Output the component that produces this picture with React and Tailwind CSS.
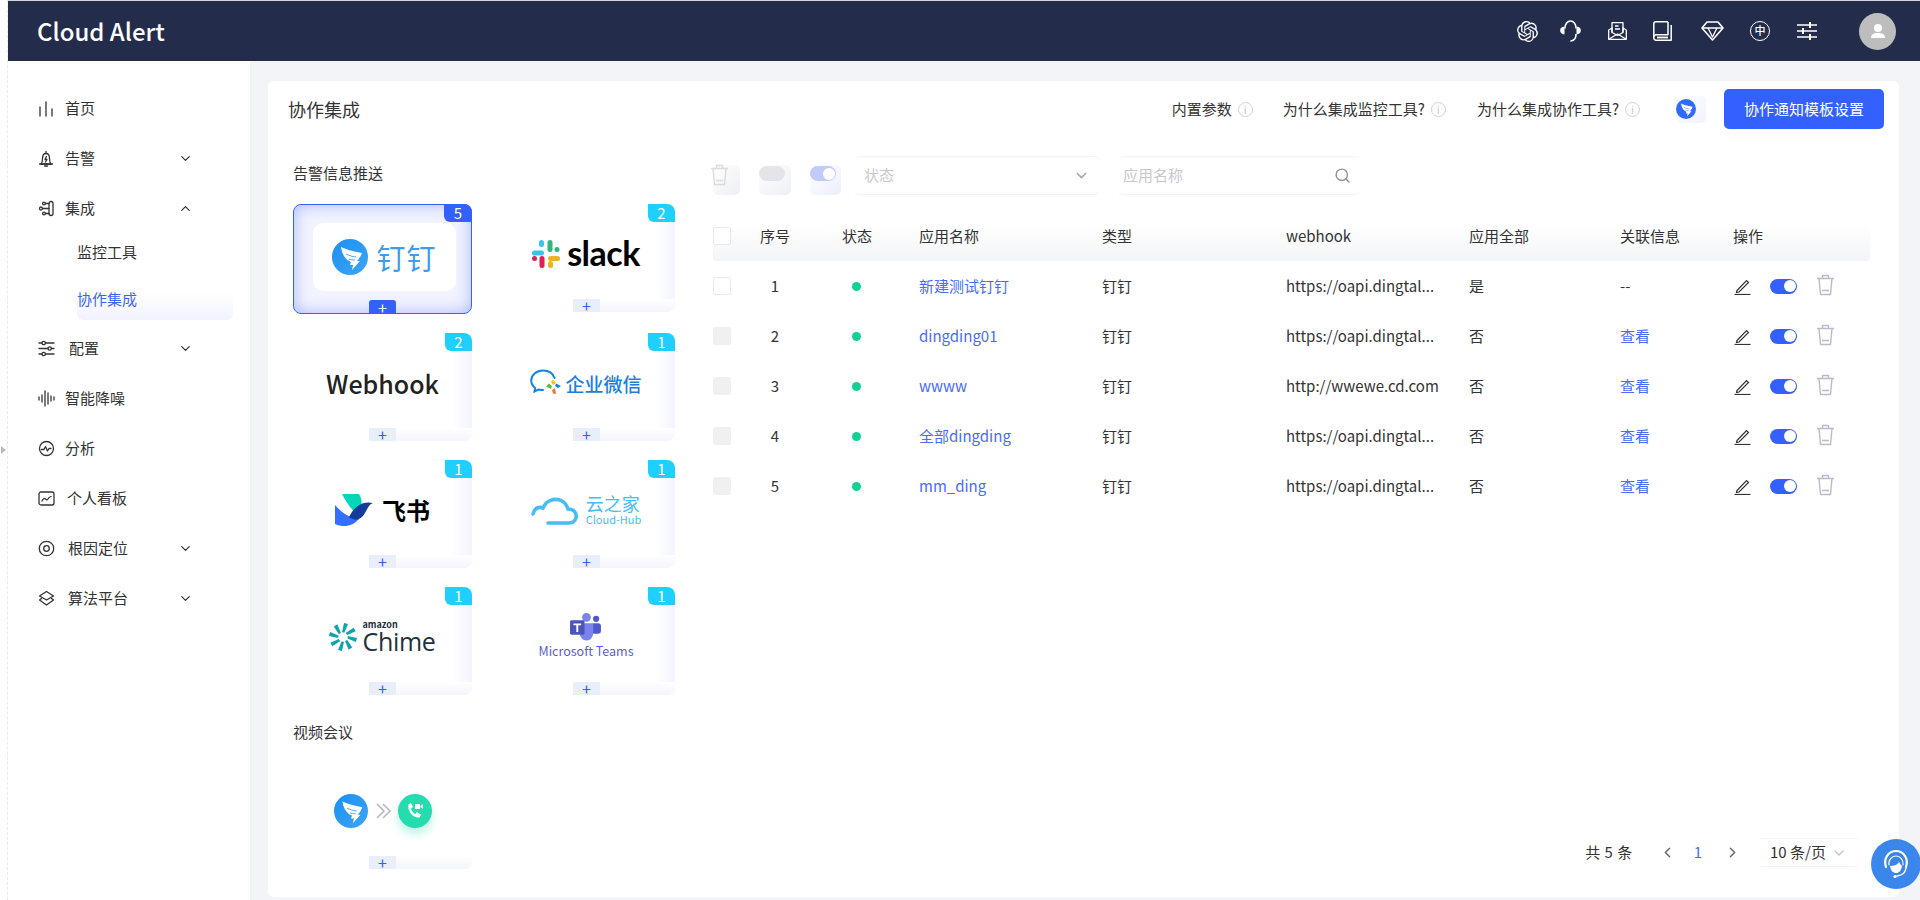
import { ChevronDown, ChevronLeft, ChevronRight, ChevronUp, Search } from "lucide-react";
import { SiOpenai } from "react-icons/si";

const stroke = { fill: "none", stroke: "currentColor", strokeWidth: 1.3, strokeLinecap: "round", strokeLinejoin: "round" };

const navIcons = {
  home: <path d="M2 7v9M8 2v14M14 9v7" />,
  bell: (
    <>
      <path d="M3 14c1.500-1.500 1.500-3 1.500-5.500C4.500 5.500 6 3.500 8 3.500s3.500 2 3.500 5c0 2.500 0 4 1.500 5.500z" />
      <path d="M8 1.500v2M1.500 14h13M6.500 16h3M8.500 6.500 7 9.500h2L7.500 12" />
    </>
  ),
  link: (
    <>
      <rect x="11" y="1.500" width="4" height="14" rx="2" />
      <path d="M11 8.500H4.500M11 3.500H7.500M11 13.500H7.500" />
      <circle cx="3" cy="8.500" r="1.500" />
      <circle cx="6" cy="3.500" r="1.400" />
      <circle cx="6" cy="13.500" r="1.400" />
    </>
  ),
  config: (
    <>
      <path d="M1 3h3M7.500 3H16M1 8.500h9M13.500 8.500H16M1 14h3M7.500 14H16" />
      <circle cx="5.700" cy="3" r="1.700" />
      <circle cx="11.700" cy="8.500" r="1.700" />
      <circle cx="5.700" cy="14" r="1.700" />
    </>
  ),
  noise: <path d="M1 7v3M4 5v7M7 1v15M10 3v11M13 6v5M16 7v3" />,
  chart: (
    <>
      <circle cx="8.500" cy="8.500" r="7" />
      <path d="M3.500 9.500h2.500l1.500-3 2 4.500 1.500-2.500h2" />
    </>
  ),
  board: (
    <>
      <rect x="1" y="2" width="15" height="13" rx="2" />
      <path d="M4 11c1.500-3 2.500-3 3.500-2s2 1 2.500 0 1.500-2 3-2.500" />
    </>
  ),
  target: (
    <>
      <circle cx="8.500" cy="8.500" r="7.200" />
      <circle cx="8.500" cy="8.500" r="2.800" />
    </>
  ),
  layers: <path d="M8.500 1.500 15.500 6l-7 4-7-4zM3.500 8.500 1.500 10l7 5 7-5-2-1.500" />,
};

const navItems = [
  { icon: "home", label: "首页" },
  { icon: "bell", label: "告警", arrow: "down" },
  { icon: "link", label: "集成", arrow: "up" },
  { icon: "config", label: "配置", arrow: "down", textClass: "ml-[14px]" },
  { icon: "noise", label: "智能降噪" },
  { icon: "chart", label: "分析" },
  { icon: "board", label: "个人看板", textClass: "ml-[12px]" },
  { icon: "target", label: "根因定位", arrow: "down", textClass: "ml-[13px]" },
  { icon: "layers", label: "算法平台", arrow: "down", textClass: "ml-[13px]" },
];

const rows = [
  { id: 1, name: "新建测试钉钉", url: "https://oapi.dingtal...", all: "是", rel: "--" },
  { id: 2, name: "dingding01", url: "https://oapi.dingtal...", all: "否", rel: "查看" },
  { id: 3, name: "wwww", url: "http://wwewe.cd.com", all: "否", rel: "查看" },
  { id: 4, name: "全部dingding", url: "https://oapi.dingtal...", all: "否", rel: "查看" },
  { id: 5, name: "mm_ding", url: "https://oapi.dingtal...", all: "否", rel: "查看" },
];

const gridCols = "grid grid-cols-[32px_60px_114px_183px_184px_183px_151px_113px_137px]";

function DingMark({ size = 36, from = "#1d8ff2", to = "#3aa6f8" }) {
  const id = `ding-${size}-${from.slice(1)}`;
  return (
    <svg width={size} height={size} viewBox="0 0 36 36">
      <defs>
        <linearGradient id={id} x1="0" y1="0" x2="1" y2="1">
          <stop offset="0" stopColor={from} />
          <stop offset="1" stopColor={to} />
        </linearGradient>
      </defs>
      <circle cx="18" cy="18" r="18" fill={`url(#${id})`} />
      <path d="M9 8c6 3 15 5 21 6-1 3-3 6-5 8h3l-8 9 1-5h-3l1-3c-5-2-9-7-10-15z" fill="#fff" />
      <path d="M14 15c3 1.500 6 2.500 10 3M17 20c2 .8 3.500 1 6 1" fill="none" stroke={from} strokeWidth="0.800" />
    </svg>
  );
}

function SlackMark() {
  return (
    <svg width="28" height="30" viewBox="0 0 28 28">
      <rect x="0" y="10.500" width="12" height="5" rx="2.500" fill="#36c5f0" />
      <rect x="7" y="0" width="5" height="7" rx="2.500" fill="#36c5f0" />
      <rect x="15.500" y="0" width="5" height="12" rx="2.500" fill="#2eb67d" />
      <rect x="22.500" y="7" width="5" height="5" rx="2.500" fill="#2eb67d" />
      <rect x="16" y="16" width="12" height="5" rx="2.500" fill="#ecb22e" />
      <rect x="16" y="21" width="5" height="7" rx="2.500" fill="#ecb22e" />
      <rect x="7.500" y="16" width="5" height="12" rx="2.500" fill="#e01e5a" />
      <rect x="0" y="16" width="5" height="5" rx="2.500" fill="#e01e5a" />
    </svg>
  );
}

function WecomMark() {
  return (
    <svg width="32" height="28" viewBox="0 0 32 28">
      <path
        d="M24.500 9C23 4.500 18.500 1.500 13 1.500 6.500 1.500 1.200 6 1.200 11.500c0 3 1.500 5.500 4 7.500l-.7 3.500 4-2c1.500.4 3 .6 4.500.6"
        fill="none"
        stroke="#1483e8"
        strokeWidth="2"
        strokeLinecap="round"
      />
      <path d="M23 10.500 26 14l-3 2-2-3z" fill="#f5c518" />
      <path d="M26 14.500 31 17l-3 2-3-2z" fill="#1483e8" />
      <path d="M25 19l1 6-3-.5-1-3.500z" fill="#f0762b" />
      <path d="M21 20l-5-2.500 3-3 3 2.500z" fill="#5dbb46" />
    </svg>
  );
}

function FeishuMark() {
  return (
    <svg width="38" height="33" viewBox="0 0 38 33">
      <path d="M7 0h17c2 3 3 7 2.500 12-1.500 4-3 6-5 8C15 14 10 6 7 0z" fill="#00d6b9" />
      <path d="M0 11c8 9 15 13 24 14-6 7-15 9-24 5z" fill="#3370ff" />
      <path d="M14 23c4-8 12-17 24-14-4 1-5 5-8 10-4 7-10 9-16 4z" fill="#133c9a" />
    </svg>
  );
}

function CloudMark() {
  return (
    <svg width="48" height="30" viewBox="0 0 48 30">
      <path
        d="M2 19c1-5 5-8 10-6 3-7 11-11 19-7 4 2 5 5 6 8 6 0 9 4 8 9-1 3-3 5-7 5H17"
        fill="none"
        stroke="#45bdf8"
        strokeWidth="3.600"
        strokeLinecap="round"
      />
    </svg>
  );
}

function ChimeMark() {
  const spokes = [0, 45, 90, 135, 180, 225, 270, 315];
  return (
    <svg width="28" height="28" viewBox="-14 -14 28 28">
      {spokes.map((deg) => (
        <path key={deg} d="M1.500-4.500 L5-13 L1-14 L-1-4.800 Z" fill="#12a3a8" transform={`rotate(${deg})`} />
      ))}
    </svg>
  );
}

function TeamsMark() {
  return (
    <svg width="31" height="28" viewBox="0 0 32 29">
      <circle cx="27" cy="6" r="3.200" fill="#5059c9" />
      <rect x="22" y="10.500" width="10" height="11" rx="3" fill="#5059c9" />
      <circle cx="17" cy="4.500" r="4.500" fill="#7b83eb" />
      <path d="M10 10.500h14v10c0 4.500-3 8-7 8s-7-3.500-7-8z" fill="#7b83eb" />
      <rect x="0" y="7.500" width="15" height="15" rx="1.500" fill="#4b53bc" />
      <path d="M3.500 11h8v1.800H8.500v7h-2v-7H3.500z" fill="#fff" />
    </svg>
  );
}

function VideoLogo() {
  return (
    <div className="flex items-center">
      <DingMark size={34} />
      <svg width="18" height="18" viewBox="0 0 18 18" className="ml-[7px] mr-[5px]" fill="none" stroke="#b5b8c2" strokeWidth="1.500">
        <path d="M2 2l7 7-7 7M8 2l7 7-7 7" />
      </svg>
      <div className="w-[34px] h-[34px] rounded-full bg-[#24dcae] flex items-center justify-center shadow-[0_6px_10px_rgba(36,220,174,0.3)]">
        <svg width="20" height="20" viewBox="0 0 20 20" fill="#fff">
          <path d="M3 3.500 6 2l2 4-2 1.500c.5 2.500 2 4.500 4.500 5.500l1.500-2 4 2.500-1.500 3c-6 1-12.500-6-11-13z" />
          <path d="M10 3h5v5h-5zM15.500 5 18 3v5l-2.500-2z" />
        </svg>
      </div>
    </div>
  );
}

const tiles = [
  {
    count: 5,
    active: true,
    logo: (
      <div className="flex items-center gap-[8px]">
        <DingMark />
        <span className="text-[29px] leading-none tracking-[1px] text-[#3a9cf5]">钉钉</span>
      </div>
    ),
  },
  {
    count: 2,
    logo: (
      <div className="flex items-center gap-[7px]">
        <SlackMark />
        <span className="font-['Lato',sans-serif] text-[34px] leading-none font-bold tracking-[-0.5px] text-black pb-[3px]">slack</span>
      </div>
    ),
  },
  { count: 2, logo: <span className="block text-[25px] leading-none font-medium text-[#222]">Webhook</span> },
  {
    count: 1,
    logo: (
      <div className="flex items-center gap-[3px]">
        <WecomMark />
        <span className="text-[19px] leading-none text-[#1a7fe0] font-medium">企业微信</span>
      </div>
    ),
  },
  {
    count: 1,
    logo: (
      <div className="flex items-center gap-[9px]">
        <FeishuMark />
        <span className="text-[24px] leading-none font-bold text-black">飞书</span>
      </div>
    ),
  },
  {
    count: 1,
    logo: (
      <div className="flex items-center gap-[7px]">
        <CloudMark />
        <div className="flex flex-col text-[#45bdf8]">
          <span className="text-[18px] leading-[19px]">云之家</span>
          <span className="text-[11px] leading-[13px]">Cloud-Hub</span>
        </div>
      </div>
    ),
  },
  {
    count: 1,
    logo: (
      <div className="flex items-center gap-[5px]">
        <ChimeMark />
        <div className="flex flex-col text-[#232f3e]">
          <span className="text-[9px] leading-[9px] font-bold">amazon</span>
          <span className="font-['Open_Sans',sans-serif] text-[25px] leading-[25px] tracking-[-0.3px]">Chime</span>
        </div>
      </div>
    ),
  },
  {
    count: 1,
    logo: (
      <div className="flex flex-col items-center">
        <TeamsMark />
        <span className="text-[12.5px] leading-[20px] text-[#5b5fc7]">Microsoft Teams</span>
      </div>
    ),
  },
];

function Tile({ count, active, logo, className }) {
  if (active) {
    return (
      <div className={`relative rounded-[8px] border border-[#3460ff] bg-[#f2f3ff] shadow-[inset_0_0_16px_#a9b7ff] flex ${className}`}>
        <div className="flex-1 mt-[18px] mb-[22px] ml-[19px] mr-[15px] bg-white rounded-[10px] flex items-center justify-center">{logo}</div>
        <span className="absolute -top-px -right-px w-[28px] h-[18px] rounded-tr-[8px] rounded-bl-[6px] bg-[#3460ff] text-white text-[15px] leading-[18px] text-center">
          {count}
        </span>
        <span className="absolute -bottom-px left-[75px] w-[27px] h-[14px] rounded-t-[3px] bg-[#3460ff] text-white text-[16px] leading-[14px] text-center">
          +
        </span>
      </div>
    );
  }
  return (
    <div className={`relative rounded-[8px] bg-white flex items-center justify-center pb-[8px] ${className}`}>
      {count && <span className="absolute top-[18px] bottom-0 right-0 w-[20px] rounded-br-[8px] bg-gradient-to-r from-white to-[#f3f4ff]" />}
      <span className="absolute left-[76px] right-0 bottom-0 h-[13px] rounded-br-[8px] bg-gradient-to-b from-white to-[#f3f4ff]" />
      <div className="relative">{logo}</div>
      {count && (
        <span className="absolute top-0 right-0 w-[27px] h-[18px] rounded-tr-[8px] rounded-bl-[6px] bg-[#1fd0ff] text-white text-[15px] leading-[18px] text-center">
          {count}
        </span>
      )}
      <span className="absolute bottom-0 left-[76px] w-[27px] h-[13px] bg-[#e9eefb] text-[#3460ff] text-[16px] leading-[13px] text-center">+</span>
    </div>
  );
}

function InfoDot() {
  return (
    <span className="ml-[6px] w-[15px] h-[15px] rounded-full border border-[#cfd2dc] text-[#c4c7d2] text-[11px] leading-[13px] text-center">i</span>
  );
}

function EditIcon() {
  return (
    <svg width="17" height="17" viewBox="0 0 17 17" fill="none" stroke="#333" strokeWidth="1.200">
      <path d="M3 12.500 12.500 2.500l2 2L5 14l-2.500.5z" />
      <path d="M0.500 16.500h16" />
    </svg>
  );
}

function TrashIcon({ color = "#b9bcc8" }) {
  return (
    <svg width="19" height="22" viewBox="0 0 19 22" fill="none" stroke={color} strokeWidth="1.400" strokeLinejoin="round">
      <path d="M1 4.500h17M6.500 4.500V1.500h6v3M3 4.500 4.500 20.500h10L16 4.500M6 16.500h7" />
    </svg>
  );
}

function HeadsetIcon() {
  return (
    <svg width="21" height="22" viewBox="0 0 21 22" fill="none" stroke="#fff" strokeWidth="1.600" strokeLinecap="round">
      <path d="M5 8C5 4 7.500 1 10.500 1S16 4 16 8" />
      <path d="M4.500 6.500C1 7 .2 8.500.2 10.500s1 3.500 4.300 4z" fill="#fff" stroke="none" />
      <path d="M16.500 6.500c3.500.5 4.300 2 4.300 4s-1 3.500-4.300 4z" fill="#fff" stroke="none" />
      <path d="M16 14.500c0 3.500-2 6-5 6.500" />
    </svg>
  );
}

function MailIcon() {
  return (
    <svg width="19" height="18" viewBox="0 0 19 18" fill="none" stroke="#fff" strokeWidth="1.300" strokeLinejoin="round">
      <path d="M.7 8 4 6v4.500l5.500 3 5.500-3V6l3.300 2v9.300H.7z" />
      <path d="M4 10.500V.7h11v9.800" />
      <path d="M7 4h3.500M7 7h5" />
      <path d="M.7 17.300 9.500 12l8.800 5.300" />
    </svg>
  );
}

function BookIcon() {
  return (
    <svg width="19" height="20" viewBox="0 0 19 20" fill="none" stroke="#fff" strokeWidth="1.500" strokeLinejoin="round">
      <path d="M15 .8H3A2.200 2.200 0 0 0 .8 3v14A2.200 2.200 0 0 0 3 19.200h15.200V4" />
      <path d="M15 .8v13H3a2.200 2.200 0 0 0-2.200 2.200" />
      <path d="M4 16.500h11" strokeWidth="1.800" />
    </svg>
  );
}

function GemIcon() {
  return (
    <svg width="23" height="20" viewBox="0 0 23 20" fill="none" stroke="#fff" strokeWidth="1.600" strokeLinejoin="round">
      <path d="M6 1h11l5 6-10.500 12L1 7z" />
      <path d="M1.500 7h20M7 7l4.500 9 4.500-9" strokeWidth="1.300" />
    </svg>
  );
}

function SlidersIcon() {
  return (
    <svg width="20" height="20" viewBox="0 0 20 20" stroke="#fff" strokeWidth="1.400" fill="none">
      <path d="M0 4h20M0 10h20M0 16h20" />
      <path d="M13 1v6M6 7v6M13 13v6" strokeWidth="2" />
    </svg>
  );
}

function Header() {
  return (
    <header className="h-[61px] shrink-0 bg-[#232c4b] flex items-center border-t border-white/80">
      <span className="ml-[29px] text-[24px] font-medium leading-none text-white">Cloud Alert</span>
      <div className="ml-auto flex items-center text-white">
        <SiOpenai size={21} />
        <span className="ml-[22px]"><HeadsetIcon /></span>
        <span className="ml-[27px]"><MailIcon /></span>
        <span className="ml-[26px]"><BookIcon /></span>
        <span className="ml-[29px]"><GemIcon /></span>
        <span className="ml-[26px] w-[20px] h-[20px] rounded-full border-[1.5px] border-white text-[11px] leading-[17px] text-center font-medium">中</span>
        <span className="ml-[27px]"><SlidersIcon /></span>
        <div className="ml-[42px] mr-[24px] w-[37px] h-[37px] rounded-full bg-[#bdbdbd] flex items-center justify-center">
          <svg width="16" height="16" viewBox="0 0 16 16" fill="#fff">
            <circle cx="8" cy="5" r="4" />
            <path d="M1 15c0-4 3-5 7-5s7 1 7 5z" />
          </svg>
        </div>
      </div>
    </header>
  );
}

function Sidebar() {
  return (
    <aside className="w-[242px] shrink-0 bg-white pt-[22px] text-[15px] text-[#333]">
      {navItems.map((item) => (
        <div key={item.label}>
          <div className="h-[50px] pl-[30px] pr-[57px] flex items-center">
            <svg width="17" height="17" viewBox="0 0 17 17" {...stroke}>
              {navIcons[item.icon]}
            </svg>
            <span className={item.textClass || "ml-[10px]"}>{item.label}</span>
            {item.arrow === "down" && <ChevronDown size={15} className="ml-auto" />}
            {item.arrow === "up" && <ChevronUp size={15} className="ml-auto" />}
          </div>
          {item.label === "集成" && (
            <div className="-mt-[3px] mb-[3px]">
              <div className="h-[45px] pl-[69px] flex items-center">监控工具</div>
              <div className="h-[45px] ml-[69px] w-[156px] pb-[11px] flex items-end leading-[20px] rounded-b-[6px] text-[#3f63f5] bg-gradient-to-b from-white from-40% to-[#f1f2ff]">
                协作集成
              </div>
            </div>
          )}
        </div>
      ))}
    </aside>
  );
}

function Toolbar() {
  return (
    <div className="h-[39px] mb-[30px] flex items-stretch">
      <div className="ml-[3px] mt-[9px] w-[27px] rounded-[5px] bg-gradient-to-br from-white to-[#eeeff3] flex justify-start">
        <span className="opacity-60 -mt-[1px] -ml-[3px]"><TrashIcon color="#c6c8cc" /></span>
      </div>
      <div className="ml-[19px] mt-[9px] w-[32px] rounded-[5px] bg-gradient-to-br from-white to-[#eeeff3]">
        <span className="block w-[26px] h-[15px] mt-[1px] rounded-full bg-[#e4e5e8]" />
      </div>
      <div className="ml-[19px] mt-[9px] w-[31px] rounded-[5px] bg-gradient-to-br from-white to-[#eceeff]">
        <span className="flex justify-end items-center pr-[1px] w-[26px] h-[15px] mt-[1px] rounded-full bg-[#c0cbfb]">
          <span className="w-[12px] h-[12px] rounded-full bg-white" />
        </span>
      </div>
      <div className="ml-[13px] w-[246px] border-y border-[#f0f1fb] rounded-[6px] pl-[10px] pr-[10px] flex items-center text-[15px] text-[#c6c8cf]">
        状态
        <ChevronDown size={17} className="ml-auto text-[#a9abb2]" />
      </div>
      <div className="ml-[18px] w-[242px] border-y border-[#f0f1fb] rounded-[6px] px-[5px] pr-[9px] flex items-center text-[15px] text-[#c6c8cf]">
        应用名称
        <Search size={17} className="ml-auto text-[#8f9198]" />
      </div>
    </div>
  );
}

function CheckCell({ disabled }) {
  return (
    <span
      className={`block w-[18px] h-[18px] rounded-[2px] border ${disabled ? "bg-[#f0f0f0] border-[#f0f0f0]" : "bg-white border-[#e6e8f4]"}`}
    />
  );
}

function AlertTable() {
  return (
    <div className="ml-[3px] text-[15px] text-[#333]">
      <div className={`${gridCols} h-[36px] rounded-b-[3px] bg-gradient-to-b from-white to-[#f3f4f6] leading-[22px]`}>
        <span className="mt-[2px]"><CheckCell /></span>
        <span className="text-center">序号</span>
        <span className="pl-[37px]">状态</span>
        <span>应用名称</span>
        <span>类型</span>
        <span>webhook</span>
        <span>应用全部</span>
        <span>关联信息</span>
        <span>操作</span>
      </div>
      {rows.map((row) => (
        <div key={row.id} className={`${gridCols} h-[50px] items-center`}>
          <CheckCell disabled={row.id !== 1} />
          <span className="text-center">{row.id}</span>
          <span className="pl-[47px]"><span className="block w-[9px] h-[9px] rounded-full bg-[#14cf96]" /></span>
          <span className="text-[#4a6cf7]">{row.name}</span>
          <span>钉钉</span>
          <span>{row.url}</span>
          <span>{row.all}</span>
          <span className={row.rel === "--" ? "" : "text-[#4a6cf7]"}>{row.rel}</span>
          <div className="flex items-center">
            <span className="ml-[1px]"><EditIcon /></span>
            <span className="ml-[19px] w-[27px] h-[15px] rounded-full bg-[#3460ff] flex items-center justify-end pr-[1px]">
              <span className="w-[12px] h-[12px] rounded-full bg-white" />
            </span>
            <span className="ml-[19px] -mt-[3px]"><TrashIcon /></span>
          </div>
        </div>
      ))}
    </div>
  );
}

function Pagination() {
  return (
    <div className="mt-auto pb-[30px] pr-[12px] flex items-center justify-end text-[15px] text-[#333]">
      <span className="tracking-[0.5px]">共 5 条</span>
      <ChevronLeft size={17} className="ml-[26px] text-[#666]" />
      <span className="ml-[18px] text-[#4a6cf7]">1</span>
      <ChevronRight size={17} className="ml-[22px] text-[#666]" />
      <div className="ml-[18px] w-[99px] h-[29px] border-y border-[#f0f1fb] rounded-[4px] pl-[11px] pr-[11px] flex items-center">
        10 条/页
        <ChevronDown size={16} className="ml-auto text-[#c4c6cc]" />
      </div>
    </div>
  );
}

export default function App() {
  return (
    <div className="w-[1920px] h-[900px] flex overflow-hidden bg-white font-['Noto_Sans_CJK_SC','Noto_Sans',sans-serif]">
      <div className="relative w-[8px] shrink-0 border-r border-dashed border-[#f0e6ee]">
        <span className="absolute left-[1px] top-[446px] border-y-[4px] border-l-[5px] border-y-transparent border-l-[#bbb]" />
      </div>
      <div className="flex-1 min-w-0 flex flex-col">
        <Header />
        <div className="flex-1 min-h-0 flex">
          <Sidebar />
          <main className="flex-1 min-w-0 bg-[#f3f4f8] pt-[20px] pl-[18px] pr-[21px] pb-[3px] flex">
            <div className="flex-1 min-w-0 bg-white rounded-[6px] flex flex-col">
              <div className="h-[56px] shrink-0 pl-[20px] pr-[15px] flex items-center text-[15px] text-[#333]">
                <h1 className="text-[18px] font-normal">协作集成</h1>
                <span className="ml-auto">内置参数</span>
                <InfoDot />
                <span className="ml-[30px]">为什么集成监控工具?</span>
                <InfoDot />
                <span className="ml-[31px]">为什么集成协作工具?</span>
                <InfoDot />
                <div className="ml-[36px] w-[30px] h-[27px] rounded-[5px] bg-gradient-to-br from-white to-[#f1f2ff] flex items-center">
                  <DingMark size={20} from="#2f6bff" to="#2f6bff" />
                </div>
                <button className="ml-[18px] w-[160px] h-[40px] rounded-[5px] bg-[#3460ff] text-white text-[15px]">协作通知模板设置</button>
              </div>
              <div className="flex-1 min-h-0 flex">
                <div className="w-[442px] shrink-0 pl-[25px] pt-[25px] text-[15px] text-[#333]">
                  <h2 className="h-[22px] leading-[22px] font-normal mb-[20px]">告警信息推送</h2>
                  <div className="grid grid-cols-[179px_178px] gap-x-[25px] gap-y-[19px] items-start">
                    {tiles.map((tile, i) => (
                      <Tile key={i} {...tile} className={tile.active ? "h-[110px]" : "h-[108px]"} />
                    ))}
                  </div>
                  <h2 className="h-[22px] leading-[22px] font-normal mt-[26px] mb-[17px]">视频会议</h2>
                  <Tile logo={<VideoLogo />} className="w-[179px] h-[109px]" />
                </div>
                <div className="flex-1 min-w-0 pt-[19px] pr-[29px] flex flex-col">
                  <Toolbar />
                  <AlertTable />
                  <Pagination />
                </div>
              </div>
            </div>
          </main>
        </div>
      </div>
      <div className="fixed right-[-1px] bottom-[11px] w-[50px] h-[50px] rounded-full bg-[#3b86ea] flex items-center justify-center">
        <svg width="32" height="34" viewBox="0 0 32 34" fill="none" stroke="#fff" strokeLinecap="round">
          <path d="M6 20C3 11 9 4 16 4s13 7 10 16" strokeWidth="2.200" />
          <path d="M9 18c-1-5 3-9 7-9s8 4 7 9" strokeWidth="1.200" />
          <path d="M10 19c4 0 7-1 9-4 1 2 2 3 3 4-1 5-3 7-6 7s-5-2-6-7z" fill="#fff" stroke="none" />
          <path d="M26 21c-1 5-3 7-9 8" strokeWidth="1.400" />
          <circle cx="15" cy="29.500" r="1.600" fill="#fff" stroke="none" />
        </svg>
      </div>
    </div>
  );
}
